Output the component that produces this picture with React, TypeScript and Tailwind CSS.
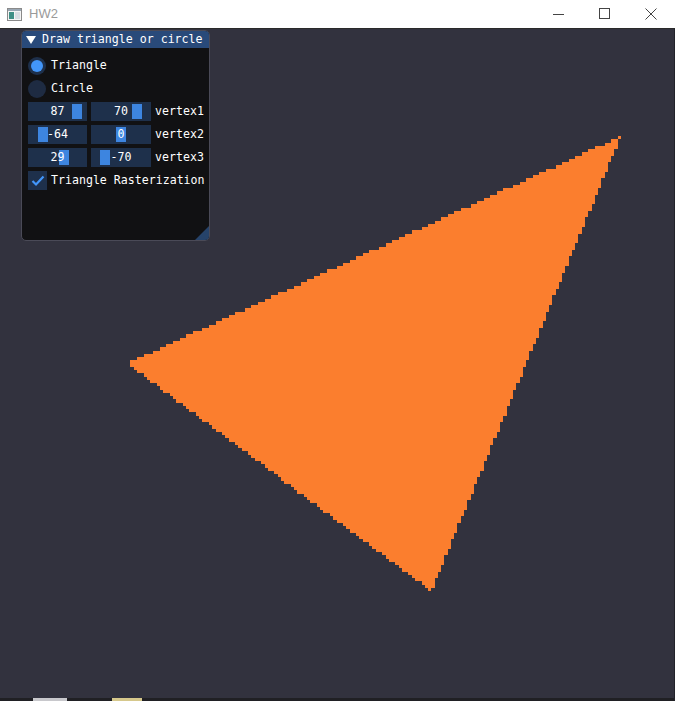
import React from "react";

const SX = 3.27;
const SY = 3.25;
const CX = 336.5;
const CY = 334.5;

function rasterPath(v: [number, number][]): string {
  const [a, b, c] = v;
  const edge = (p: [number, number], q: [number, number], x: number, y: number) =>
    (q[0] - p[0]) * (y - p[1]) - (q[1] - p[1]) * (x - p[0]);
  const area = edge(a, b, c[0], c[1]);
  const sign = area >= 0 ? 1 : -1;
  let d = "";
  for (let j = -110; j <= 110; j++) {
    let imin = Infinity;
    let imax = -Infinity;
    for (let i = -110; i <= 110; i++) {
      const x = i + 0.5;
      const y = j + 0.5;
      const e0 = edge(a, b, x, y) * sign;
      const e1 = edge(b, c, x, y) * sign;
      const e2 = edge(c, a, x, y) * sign;
      if (e0 >= 0 && e1 >= 0 && e2 >= 0) {
        if (i < imin) imin = i;
        if (i > imax) imax = i;
      }
    }
    if (imin <= imax) {
      const x0 = (CX + imin * SX).toFixed(2);
      const x1 = (CX + (imax + 1) * SX).toFixed(2);
      const y0 = (CY - (j + 1) * SY).toFixed(2);
      const y1 = (CY - j * SY).toFixed(2);
      d += `M${x0} ${y0}H${x1}V${y1}H${x0}Z`;
    }
  }
  return d;
}

const mono = { fontFamily: '"DejaVu Sans Mono", "Liberation Mono", monospace' };

function Slider({ value, w }: { value: number; w: number }) {
  const grabW = 10;
  const travel = w - 4 - grabW;
  const left = 2 + Math.round(((value + 100) / 200) * travel);
  return (
    <div className="relative h-[19px] bg-[#1e304b]" style={{ width: w }}>
      <div className="absolute top-[2px] h-[15px] w-[10px] bg-[#3d85e0]" style={{ left }} />
      <div className="relative text-center leading-[19px] text-white">{value}</div>
    </div>
  );
}

function SliderRow({ a, b, label }: { a: number; b: number; label: string }) {
  return (
    <div className="flex h-[19px] items-center">
      <Slider value={a} w={59} />
      <div className="w-[4px]" />
      <Slider value={b} w={60} />
      <div className="ml-[4px] leading-[19px] text-white">{label}</div>
    </div>
  );
}

export default function App() {
  const path = rasterPath([
    [87, 70],
    [-64, 0],
    [29, -70],
  ]);
  return (
    <div className="flex h-[701px] w-[675px] flex-col overflow-hidden bg-[#32323e]">
      {/* OS title bar */}
      <div
        className="flex h-[29px] shrink-0 items-center border-b border-[#2a2a2a] bg-white"
        style={{ fontFamily: '"Liberation Sans", Arial, sans-serif' }}
      >
        <svg className="ml-[7px]" width="15" height="13" viewBox="0 0 15 13">
          <rect x="0.5" y="0.5" width="14" height="12" fill="#f4f4f4" stroke="#8a8a8a" />
          <rect x="1" y="1" width="13" height="2" fill="#9aa7b4" />
          <rect x="2" y="4" width="5" height="7" fill="#3f8f86" />
          <rect x="8" y="4" width="5" height="7" fill="#d8dde2" />
        </svg>
        <span className="ml-[7px] text-[13px] text-[#9a9a9a]">HW2</span>
        <div className="flex-1" />
        <svg width="12" height="12" viewBox="0 0 12 12" className="mr-[34px]">
          <line x1="0" y1="6.5" x2="11" y2="6.5" stroke="#444" strokeWidth="1" />
        </svg>
        <svg width="12" height="12" viewBox="0 0 12 12" className="mr-[34px]">
          <rect x="0.5" y="0.5" width="10" height="10" fill="none" stroke="#444" strokeWidth="1" />
        </svg>
        <svg width="12" height="12" viewBox="0 0 12 12" className="mr-[18px]">
          <path d="M0.5 0.5L11.5 11.5M11.5 0.5L0.5 11.5" stroke="#444" strokeWidth="1" />
        </svg>
      </div>

      {/* GL canvas */}
      <div className="relative flex-1 border-r border-[#22222a]">
        <svg className="absolute inset-0" width="675" height="672" viewBox="0 0 675 672">
          <path d={path} fill="#fb7e2e" shapeRendering="crispEdges" />
        </svg>

        {/* ImGui window */}
        <div
          className="absolute left-[21px] top-[1px] flex h-[211px] w-[189px] flex-col overflow-hidden rounded-[5px] border border-[#4a4a57] bg-[#111113] text-[11.6px]"
          style={mono}
        >
          <div className="flex h-[17px] shrink-0 items-center bg-[#294a7a] pl-[4px] leading-[17px] text-white">
            <svg width="10" height="9" viewBox="0 0 10 9" className="mr-[6px]">
              <path d="M0 1H10L5 9Z" fill="#ffffff" />
            </svg>
            <span>Draw triangle or circle</span>
          </div>
          <div className="flex flex-col gap-[4px] pl-[6px] pt-[8px]">
            <div className="flex h-[19px] items-center">
              <div className="flex h-[18px] w-[18px] items-center justify-center rounded-full bg-[#1e304b]">
                <div className="h-[12px] w-[12px] rounded-full bg-[#4296fa]" />
              </div>
              <span className="ml-[5px] leading-[19px] text-white">Triangle</span>
            </div>
            <div className="flex h-[19px] items-center">
              <div className="h-[18px] w-[18px] rounded-full bg-[#1e2b42]" />
              <span className="ml-[5px] leading-[19px] text-white">Circle</span>
            </div>
            <SliderRow a={87} b={70} label="vertex1" />
            <SliderRow a={-64} b={0} label="vertex2" />
            <SliderRow a={29} b={-70} label="vertex3" />
            <div className="flex h-[19px] items-center">
              <div className="flex h-[19px] w-[19px] items-center justify-center bg-[#1e304b]">
                <svg width="14" height="12" viewBox="0 0 14 12">
                  <path d="M1.5 6L5 9.5L12.5 1.5" fill="none" stroke="#4296fa" strokeWidth="2.2" />
                </svg>
              </div>
              <span className="ml-[4px] leading-[19px] text-white">Triangle Rasterization</span>
            </div>
          </div>
          <div className="flex-1" />
          <svg className="absolute bottom-0 right-0" width="14" height="14" viewBox="0 0 14 14">
            <path d="M14 0L14 14L0 14Z" fill="#26436a" />
          </svg>
        </div>

        {/* taskbar remnants at the very bottom */}
        <div className="absolute bottom-0 left-0 h-[3px] w-full bg-[#202024]" />
        <div className="absolute bottom-0 left-[33px] h-[3px] w-[34px] bg-[#c8c8cc]" />
        <div className="absolute bottom-0 left-[112px] h-[3px] w-[30px] bg-[#d6c88c]" />
      </div>
    </div>
  );
}
